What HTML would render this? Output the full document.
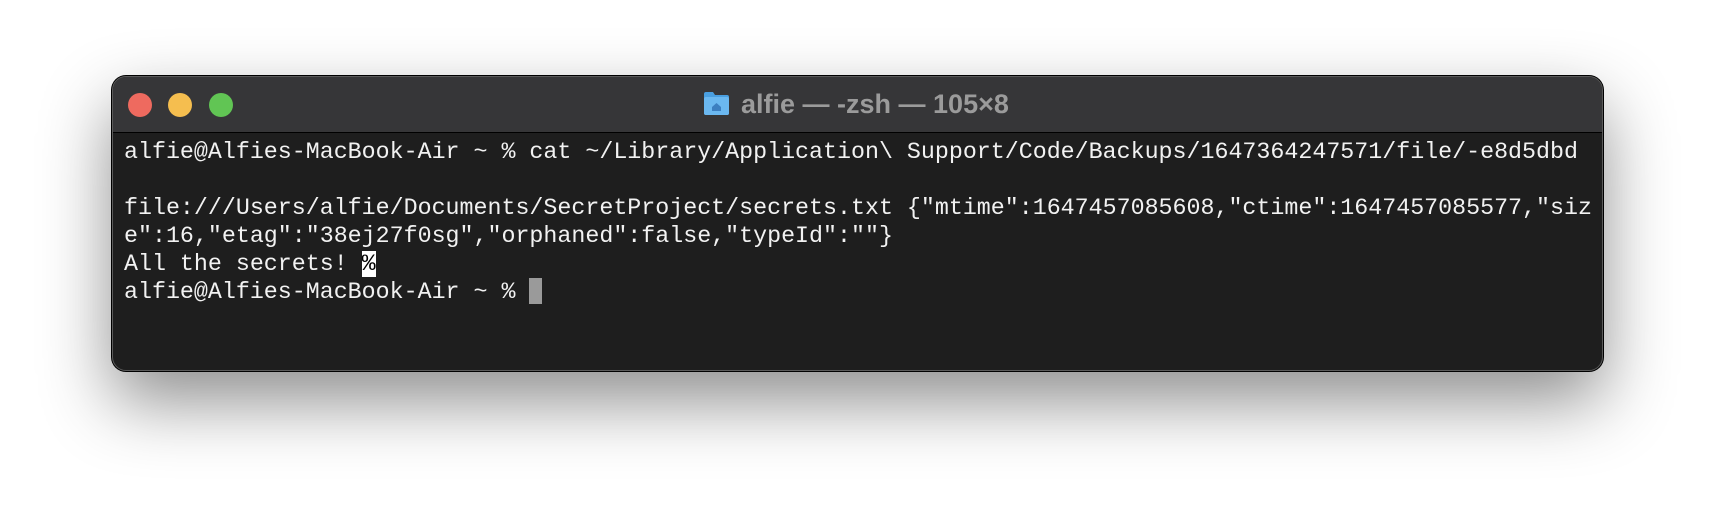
<!DOCTYPE html>
<html><head><meta charset="utf-8"><style>
html,body{margin:0;padding:0;width:1714px;height:518px;background:#fff;overflow:hidden;}
.win{position:absolute;left:112px;top:76px;width:1489px;height:293px;border-radius:14px;background:#1e1e1e;border:1px solid #5a5a5a;box-shadow:0 0 0 1px #000, 0 30px 70px rgba(0,0,0,0.45);overflow:hidden;}
.tb{position:absolute;left:0;top:0;right:0;height:55px;background:#363638;border-bottom:1px solid #000;}
.l{position:absolute;top:16px;width:24px;height:24px;border-radius:50%;}
.title{position:absolute;left:628px;top:12px;font:bold 27px "Liberation Sans",sans-serif;color:#9b9b9b;white-space:nowrap;}
.term{position:absolute;left:11px;top:61px;font:23.3px/28px "Liberation Mono",monospace;color:#f2f2f2;white-space:pre;}
.cur{display:inline-block;width:13px;height:26px;background:#9a9a9a;vertical-align:-6px;}
.inv{background:#fff;color:#000;}
</style></head><body>
<div class="win">
 <div class="tb">
  <div class="l" style="left:15px;background:#ee6a5f"></div>
  <div class="l" style="left:55px;background:#f5be4f"></div>
  <div class="l" style="left:96px;background:#61c554"></div>
  <svg style="position:absolute;left:590px;top:14px" width="27" height="25" viewBox="0 0 27 25"><path d="M1 3 a2 2 0 0 1 2-2 h7 l2 3 h12 a2 2 0 0 1 2 2 v16 a2 2 0 0 1-2 2 h-21 a2 2 0 0 1-2-2z" fill="#4a9fe0"/><rect x="1" y="6" width="25" height="18" rx="2" fill="#6bb8f0"/><path d="M9 16 l4.5-4 l4.5 4 v4 h-9z" fill="#3c7fc0"/></svg>
  <div class="title">alfie — -zsh — 105×8</div>
 </div>
 <div class="term">alfie@Alfies-MacBook-Air ~ % cat ~/Library/Application\ Support/Code/Backups/1647364247571/file/-e8d5dbd

file:///Users/alfie/Documents/SecretProject/secrets.txt {"mtime":1647457085608,"ctime":1647457085577,"siz
e":16,"etag":"38ej27f0sg","orphaned":false,"typeId":""}
All the secrets! <span class="inv">%</span>
alfie@Alfies-MacBook-Air ~ % <span class="cur"></span></div>
</div>
</body></html>
